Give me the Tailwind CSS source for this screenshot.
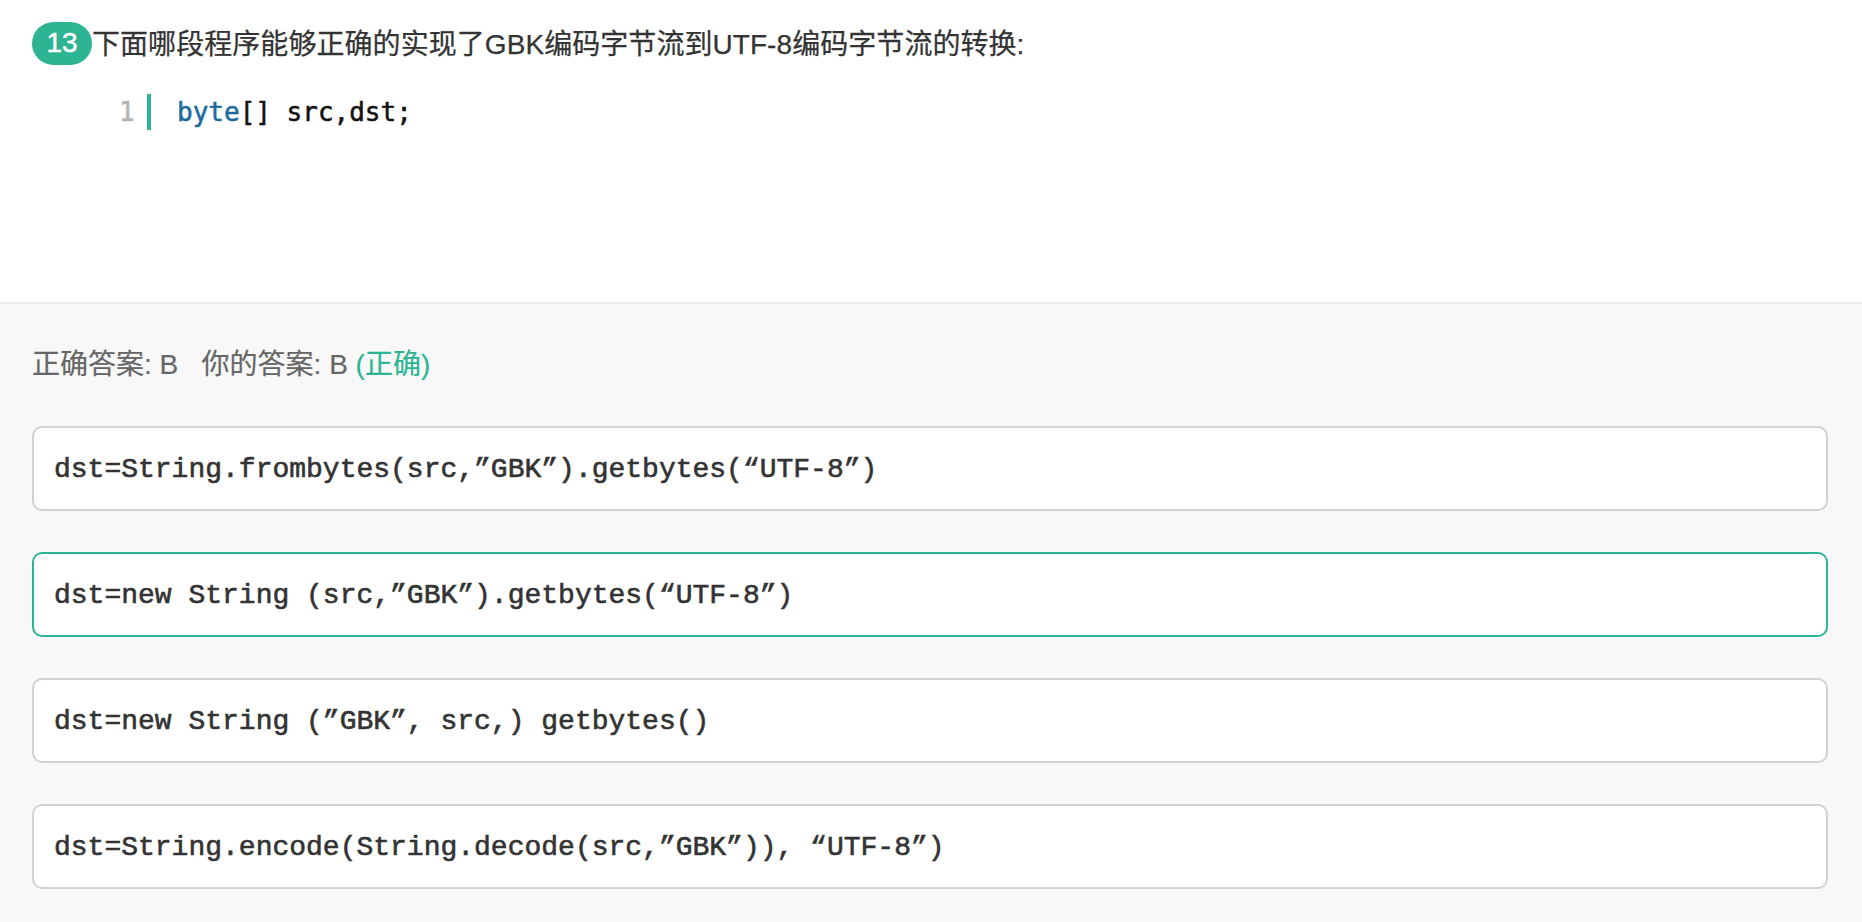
<!DOCTYPE html>
<html lang="zh-CN">
  <head>
    <meta charset="UTF-8" />
    <title>题目 13</title>
    <script src="https://cdn.jsdelivr.net/npm/@tailwindcss/browser@4"></script>
  </head>
  <body class="bg-white text-[#333] font-['Liberation_Sans','Noto_Sans_CJK_SC',sans-serif]">
    <!-- 题目 -->
    <section class="h-[302px] pl-[32px] pt-[20px]">
      <div class="flex items-center h-[46px]">
        <span class="flex items-center justify-center w-[60px] h-[43px] rounded-full bg-[#2db493] text-white text-[28px] leading-none [-webkit-text-stroke:0.5px_white]">13</span>
        <p class="mt-[4px] text-[28px] leading-[46px] tracking-[0.06px] [-webkit-text-stroke:0.25px_#333]">下面哪段程序能够正确的实现了GBK编码字节流到UTF-8编码字节流的转换:</p>
      </div>
      <div class="flex items-center mt-[28px] ml-[87px] h-[36px] font-['DejaVu_Sans_Mono',monospace] text-[26px] [-webkit-text-stroke:0.5px]">
        <span class="w-[16px] text-[#b3b3b3]">1</span>
        <span class="w-[4px] h-[36px] ml-[12px] bg-[#2db493] shrink-0"></span>
        <span class="ml-[26px] text-[#111]"><span class="text-[#1b6a9c]">byte</span>[] src,dst;</span>
      </div>
    </section>

    <!-- 答案 -->
    <section class="h-[620px] border-t-2 border-[#eeeeee] bg-[#f8f8f8] pl-[32px] pr-[34px]">
      <p class="pt-[40px] h-[122px] text-[28px] leading-[42px] text-[#666] [-webkit-text-stroke:0.2px]">正确答案: B&nbsp;&nbsp; 你的答案: B <span class="text-[#2db493]">(正确)</span></p>
      <div class="flex flex-col gap-[41px] font-['Liberation_Mono',monospace] text-[28px] text-[#333] [-webkit-text-stroke:0.6px_#333]">
        <div class="flex items-center h-[85px] px-[20px] pt-[2px] rounded-[10px] border-2 border-[#d2d2d2] bg-white">dst=String.frombytes(src,”GBK”).getbytes(“UTF-8”)</div>
        <div class="flex items-center h-[85px] px-[20px] pt-[2px] rounded-[10px] border-2 border-[#2db493] bg-white">dst=new String (src,”GBK”).getbytes(“UTF-8”)</div>
        <div class="flex items-center h-[85px] px-[20px] pt-[2px] rounded-[10px] border-2 border-[#d2d2d2] bg-white">dst=new String (”GBK”, src,) getbytes()</div>
        <div class="flex items-center h-[85px] px-[20px] pt-[2px] rounded-[10px] border-2 border-[#d2d2d2] bg-white">dst=String.encode(String.decode(src,”GBK”)), “UTF-8”)</div>
      </div>
    </section>
  </body>
</html>
